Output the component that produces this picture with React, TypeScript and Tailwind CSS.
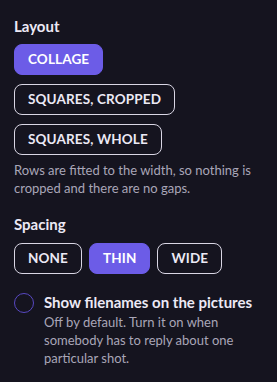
import React from "react";

const btnBase =
  "h-[31px] px-[13px] rounded-[8px] text-[13.5px] font-bold tracking-[0.01em] flex items-center justify-center";
const active = "bg-[#6c5ce7] text-white border border-[#6c5ce7]";
const inactive = "bg-transparent text-[#ece9f5] border border-[#d9d6e4]";

export default function App() {
  return (
    <div
      className="w-[277px] h-[382px] bg-[#15141f] px-[14px] pt-[16px] text-white"
      style={{ fontFamily: "Lato, 'Noto Sans', sans-serif" }}
    >
      <div className="text-[15px] font-bold text-[#ece9f5] leading-[21px]">Layout</div>
      <div className="mt-[7px] flex flex-col items-start gap-[9px]">
        <button className={`${btnBase} ${active}`}>COLLAGE</button>
        <button className={`${btnBase} ${inactive}`}>SQUARES, CROPPED</button>
        <button className={`${btnBase} ${inactive}`}>SQUARES, WHOLE</button>
      </div>
      <p className="mt-[6px] text-[13px] leading-[18px] text-[#a9a6b8]">
        Rows are fitted to the width, so nothing is cropped and there are no gaps.
      </p>
      <div className="mt-[17px] text-[15px] font-bold text-[#ece9f5] leading-[21px]">Spacing</div>
      <div className="mt-[8px] flex gap-[7px]">
        <button className={`${btnBase} ${inactive}`}>NONE</button>
        <button className={`${btnBase} ${active}`}>THIN</button>
        <button className={`${btnBase} ${inactive}`}>WIDE</button>
      </div>
      <div className="mt-[18px] flex gap-[10px]">
        <div className="mt-[1px] w-[20px] h-[20px] shrink-0 rounded-full border-[1.5px] border-[#5848c2]" />
        <div>
          <div className="text-[15px] font-bold text-[#ece9f5] leading-[21px]">
            Show filenames on the pictures
          </div>
          <p className="text-[13px] leading-[18px] text-[#a9a6b8]">
            Off by default. Turn it on when somebody has to reply about one particular shot.
          </p>
        </div>
      </div>
    </div>
  );
}
